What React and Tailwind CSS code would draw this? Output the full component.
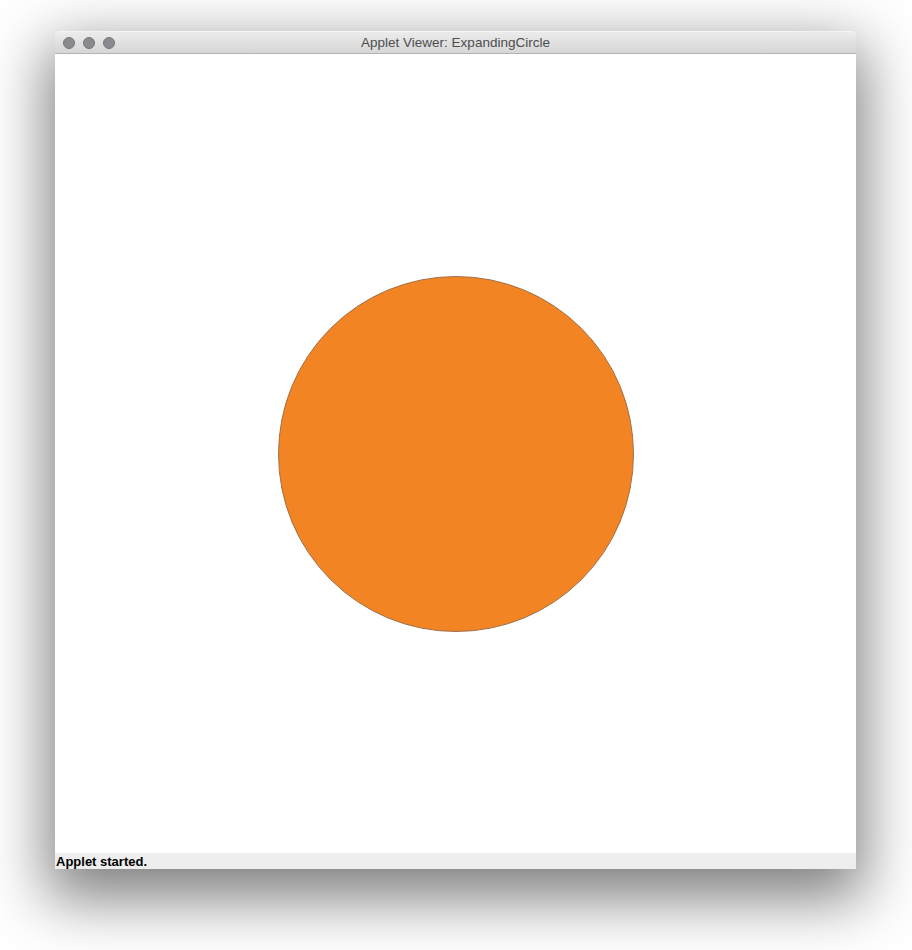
import React from 'react';

const TrafficLight = () => (
  <span className="block w-[12px] h-[12px] rounded-full bg-[#8a8a8e] border border-[#77777b]" />
);

export default function App() {
  return (
    <div className="w-[912px] h-[950px] bg-white pt-[31px] pl-[55px] overflow-hidden">
      {/* Window */}
      <div className="w-[801px] flex flex-col rounded-t-[5px] shadow-[0_22px_60px_8px_rgba(0,0,0,0.5)] bg-white">
        {/* Title bar */}
        <div className="relative h-[23px] flex items-center justify-center rounded-t-[5px] bg-gradient-to-b from-[#ececec] to-[#d6d6d6] border-b border-[#b3b3b3] border-t border-t-[#f4f4f4]">
          <div className="absolute left-[8px] top-[5px] flex gap-[8px]">
            <TrafficLight />
            <TrafficLight />
            <TrafficLight />
          </div>
          <span className="text-[13.5px] text-[#4d4d4d] font-['Liberation_Sans',sans-serif] leading-none">
            Applet Viewer: ExpandingCircle
          </span>
        </div>

        {/* Applet area */}
        <div className="h-[799px] bg-white flex items-center justify-center">
          <div className="w-[356px] h-[356px] rounded-full bg-[#f28423] border border-[#a0704a]" />
        </div>

        {/* Status bar */}
        <div className="h-[16px] bg-[#eeeeee] flex items-end pl-[1px]">
          <span className="text-[13px] leading-[15px] font-semibold text-black font-['Liberation_Sans',sans-serif]">
            Applet started.
          </span>
        </div>
      </div>
    </div>
  );
}
